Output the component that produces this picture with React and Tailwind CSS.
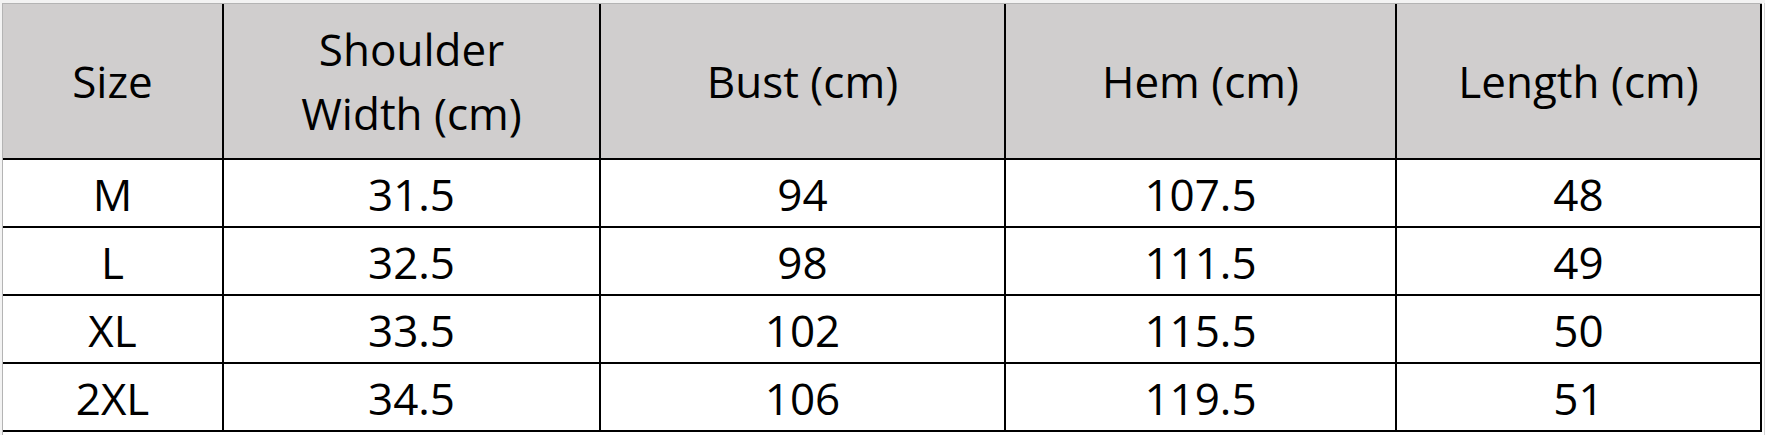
const HEAD = ['Size', 'Shoulder\nWidth (cm)', 'Bust (cm)', 'Hem (cm)', 'Length (cm)'];

const ROWS = [
  ['M', '31.5', '94', '107.5', '48'],
  ['L', '32.5', '98', '111.5', '49'],
  ['XL', '33.5', '102', '115.5', '50'],
  ['2XL', '34.5', '106', '119.5', '51'],
];

export default function App() {
  return (
    <div
      className="w-[1765px] h-[435px] bg-white overflow-hidden text-black"
      style={{ fontFamily: '"Open Sans", "Noto Sans", sans-serif' }}
    >
      <div className="h-[3px] bg-[#f3f3f3]" />
      <div className="flex">
        <div className="w-[2px] bg-[#f3f3f3]" />
        <div className="border-t border-l border-[#b4b4b4]">
          <div className="grid grid-cols-[221px_377px_405px_391px_365px] grid-rows-[156px_68px_68px_68px_68px] text-[44px]">
            {HEAD.map((h) => (
              <div
                key={h}
                className="bg-[#d0cece] border-r-2 border-b-2 border-black flex items-center justify-center text-center whitespace-pre-line leading-[64px]"
              >
                {h}
              </div>
            ))}
            {ROWS.map((r) =>
              r.map((v, i) => (
                <div
                  key={r[0] + i}
                  className="border-r-2 border-b-2 border-black flex items-center justify-center leading-[48px] pt-[2px]"
                >
                  {v}
                </div>
              ))
            )}
          </div>
        </div>
        <div className="w-[2px]" />
        <div className="w-px h-[435px] bg-[#d4d4d4]" />
      </div>
    </div>
  );
}
